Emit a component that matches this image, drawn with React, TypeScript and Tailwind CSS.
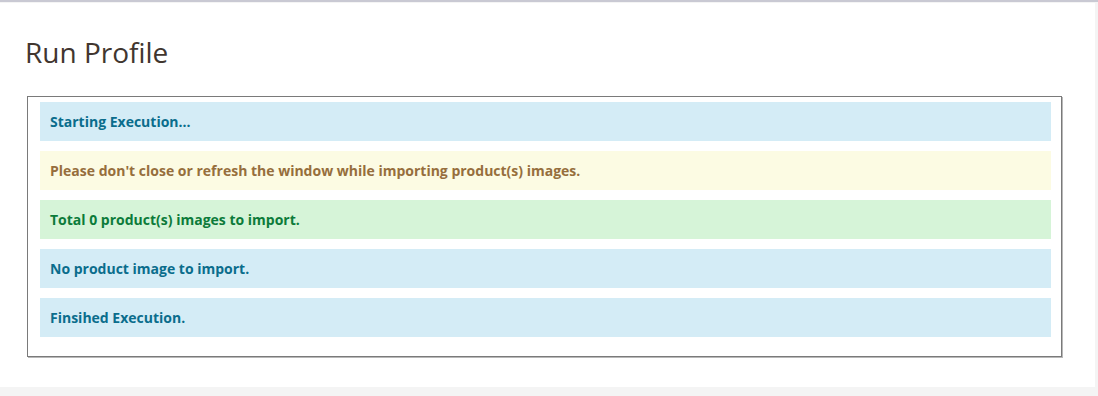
import React from "react";

const msgs = [
  { t: "Starting Execution...", c: "bg-[#d4ecf6] text-[#0a6d8c]" },
  { t: "Please don't close or refresh the window while importing product(s) images.", c: "bg-[#fcfbe3] text-[#966e3c]" },
  { t: "Total 0 product(s) images to import.", c: "bg-[#d6f4d8] text-[#0c7b3a]" },
  { t: "No product image to import.", c: "bg-[#d4ecf6] text-[#0a6d8c]" },
  { t: "Finsihed Execution.", c: "bg-[#d4ecf6] text-[#0a6d8c]" },
];

export default function App() {
  return (
    <div className="w-[1098px] h-[396px] bg-[#f4f4f4] overflow-hidden" style={{ fontFamily: '"Open Sans", sans-serif' }}>
      <div className="h-[3px] border-t-2 border-[#c9c9d3] bg-[#f4f4f4]" />
      <div className="w-[1095px] h-[384px] bg-white pl-[27px] pt-[31px]">
        <h1 className="text-[28px] leading-[36px] text-[#41362f] font-normal ml-[-2px]">Run Profile</h1>
        <div className="mt-[26px] w-[1035px] border border-[#7a7a7a] shadow-[1px_1px_0_#b8b8b8] pt-[5px] pb-[19px] pl-[12px] pr-[10px] flex flex-col gap-[10px]">
          {msgs.map((m, i) => (
            <div key={i} className={`h-[39px] flex items-center px-[10px] text-[14px] font-bold ${m.c}`}>
              {m.t}
            </div>
          ))}
        </div>
      </div>
    </div>
  );
}
